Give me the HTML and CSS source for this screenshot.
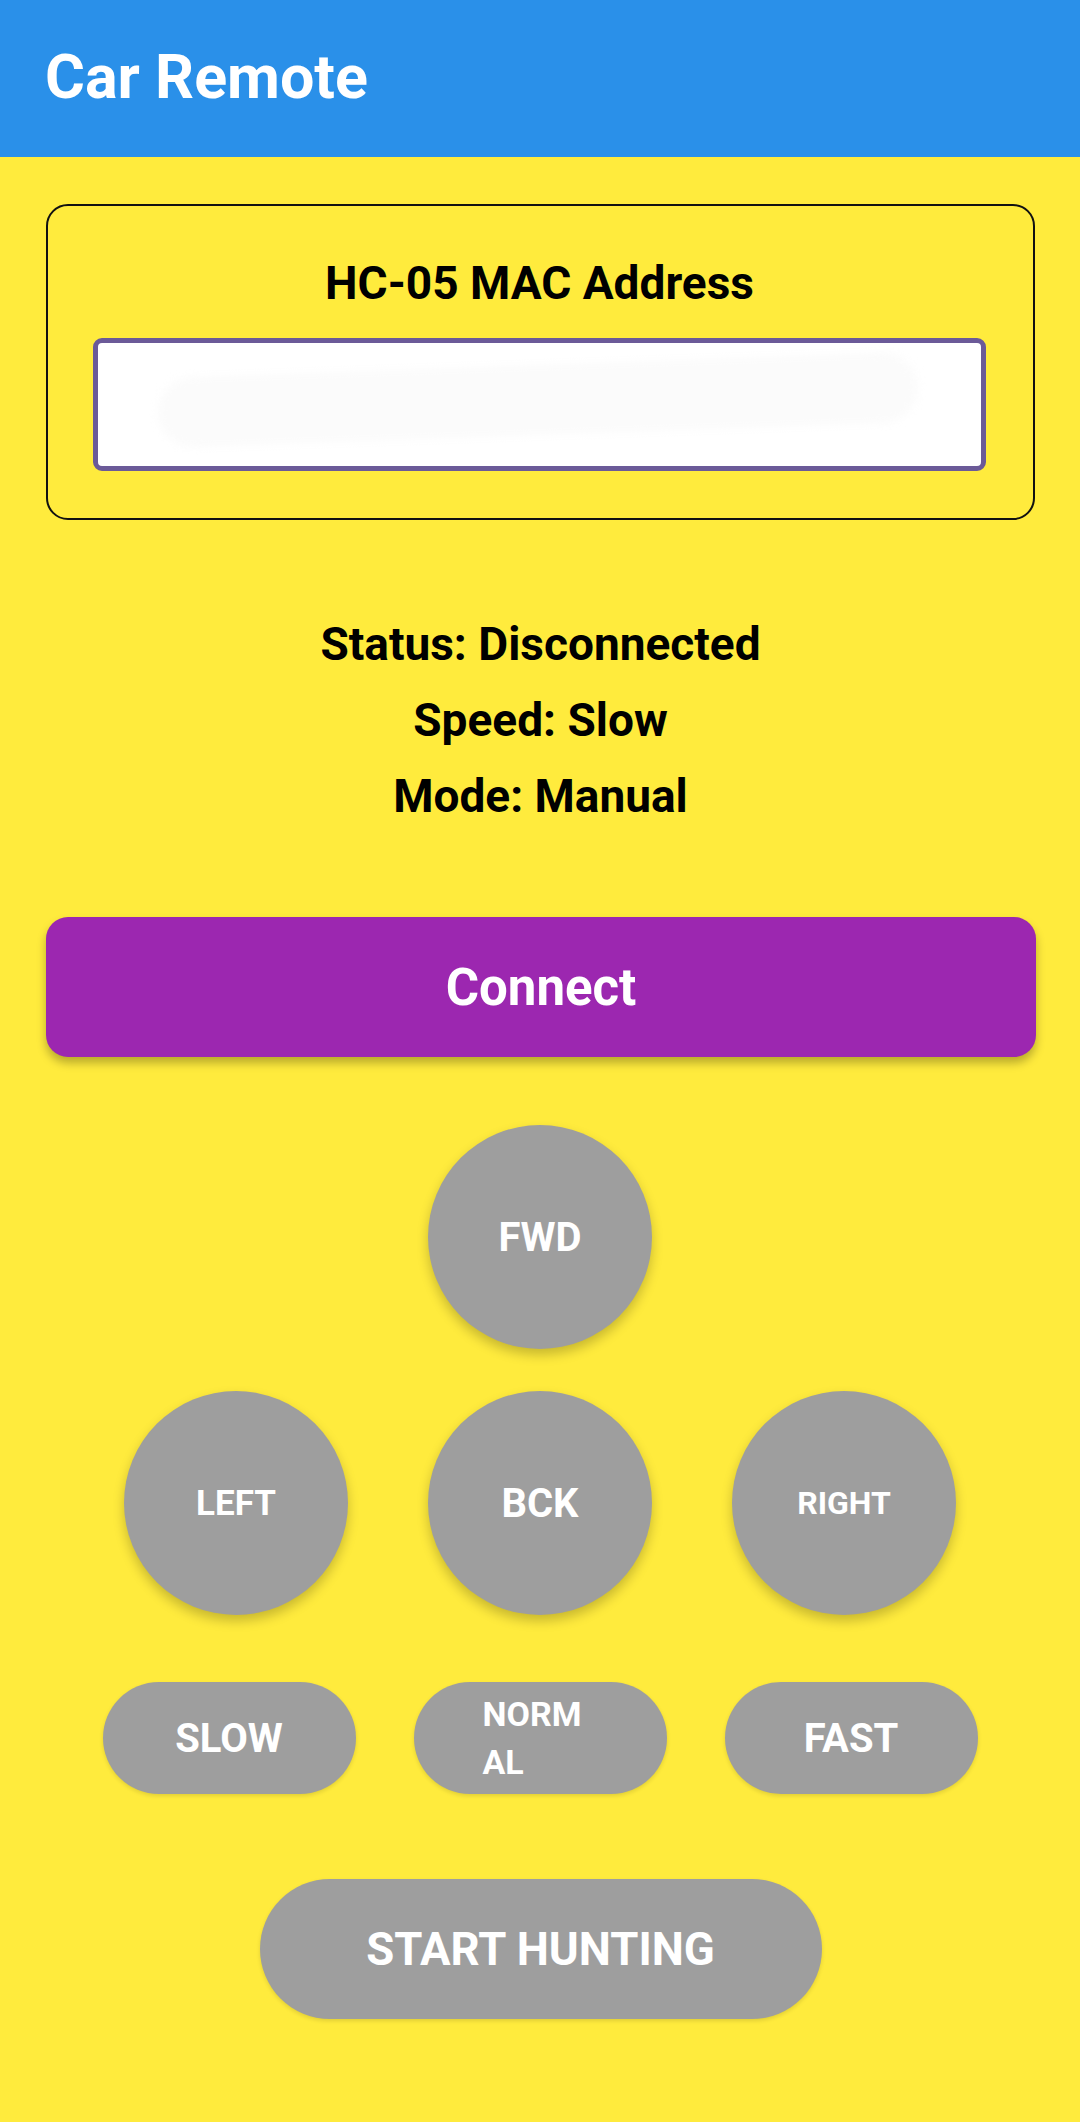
FILE: index.html
```html
<!DOCTYPE html>
<html lang="en">
<head>
<meta charset="utf-8">
<title>Car Remote</title>
<link rel="stylesheet" href="styles.css">
</head>
<body>
<header class="appbar">
  <h1 class="appbar-title">Car Remote</h1>
</header>
<main class="content">
  <section class="mac-card">
    <h2 class="mac-title">HC-05 MAC Address</h2>
    <div class="mac-input"><span class="mac-redacted"></span></div>
  </section>
  <section class="status">
    <p class="status-line">Status: Disconnected</p>
    <p class="status-line">Speed: Slow</p>
    <p class="status-line">Mode: Manual</p>
  </section>
  <button class="connect-btn">Connect</button>
  <section class="dpad">
    <div class="dpad-row">
      <button class="round-btn fs-big">FWD</button>
    </div>
    <div class="dpad-row">
      <button class="round-btn fs-mid">LEFT</button>
      <button class="round-btn fs-big">BCK</button>
      <button class="round-btn fs-small">RIGHT</button>
    </div>
  </section>
  <section class="speed-row">
    <button class="pill-btn">SLOW</button>
    <button class="pill-btn pill-wrap"><span class="wrap-text">NORMAL</span></button>
    <button class="pill-btn">FAST</button>
  </section>
  <div class="hunt-row">
    <button class="hunt-btn">START HUNTING</button>
  </div>
</main>
</body>
</html>
```

FILE: styles.css
```css
* { box-sizing: border-box; }

html, body {
  margin: 0;
  padding: 0;
}

body {
  width: 1080px;
  min-height: 2122px;
  background: #FFEB3D;
  font-family: Roboto, "Liberation Sans", sans-serif;
  color: #000;
}

.appbar {
  height: 157px;
  background: #2A90E9;
  display: flex;
  align-items: center;
  padding-left: 45px;
  padding-bottom: 2px;
}

.appbar-title {
  margin: 0;
  color: #fff;
  font-size: 61px;
  font-weight: 700;
  line-height: 1;
}

.content {
  padding: 47px 45px 0 46px;
  display: flex;
  flex-direction: column;
}

.mac-card {
  border: 2px solid #111;
  border-radius: 22px;
  padding: 50px 47px 47px 45px;
  height: 316px;
}

.mac-title {
  margin: 0 0 28px;
  text-align: center;
  font-size: 46px;
  font-weight: 700;
  line-height: 54px;
}

.mac-input {
  height: 133px;
  background: #fff;
  border: 5px solid #6B5A98;
  border-radius: 9px;
  position: relative;
  overflow: hidden;
}

.mac-redacted {
  position: absolute;
  left: 60px;
  top: 22px;
  width: 760px;
  height: 70px;
  background: #FBFBFB;
  border-radius: 40px;
  transform: rotate(-2deg);
  filter: blur(4px);
}

.status {
  margin-top: 86px;
  text-align: center;
}

.status-line {
  margin: 0;
  font-size: 46px;
  font-weight: 700;
  line-height: 76px;
}

.connect-btn {
  margin-top: 83px;
  height: 140px;
  width: 990px;
  border: none;
  border-radius: 22px;
  background: #9C27B0;
  color: #fff;
  font-family: inherit;
  font-size: 51px;
  font-weight: 700;
  box-shadow: 0 6px 10px rgba(0, 0, 0, 0.28);
}

.dpad {
  margin-top: 68px;
  display: flex;
  flex-direction: column;
  gap: 42px;
  margin-left: -46px;
  margin-right: -45px;
}

.dpad-row {
  display: flex;
  justify-content: center;
  gap: 80px;
}

.round-btn {
  width: 224px;
  height: 224px;
  border-radius: 50%;
  border: none;
  background: #9E9E9E;
  color: #fff;
  font-family: inherit;
  font-weight: 700;
  padding: 0;
  box-shadow: 0 6px 12px rgba(0, 0, 0, 0.22);
}

.fs-big { font-size: 40px; }
.fs-mid { font-size: 35px; }
.fs-small { font-size: 32px; }

.speed-row {
  margin-top: 67px;
  margin-left: -46px;
  margin-right: -45px;
  display: flex;
  justify-content: center;
  gap: 58px;
}

.pill-btn {
  width: 253px;
  height: 112px;
  border-radius: 56px;
  border: none;
  background: #9E9E9E;
  color: #fff;
  font-family: inherit;
  font-size: 40px;
  font-weight: 700;
  padding: 0;
  box-shadow: 0 2px 4px rgba(0, 0, 0, 0.12);
}

.pill-wrap {
  display: flex;
  align-items: center;
  padding-left: 69px;
  text-align: left;
}

.wrap-text {
  display: block;
  width: 112px;
  font-size: 34px;
  line-height: 48px;
  word-break: break-all;
}

.hunt-row {
  margin-top: 85px;
  display: flex;
  justify-content: center;
}

.hunt-btn {
  width: 562px;
  height: 140px;
  border-radius: 70px;
  border: none;
  background: #9E9E9E;
  color: #fff;
  font-family: inherit;
  font-size: 45.5px;
  font-weight: 700;
  box-shadow: 0 2px 4px rgba(0, 0, 0, 0.12);
}
```
